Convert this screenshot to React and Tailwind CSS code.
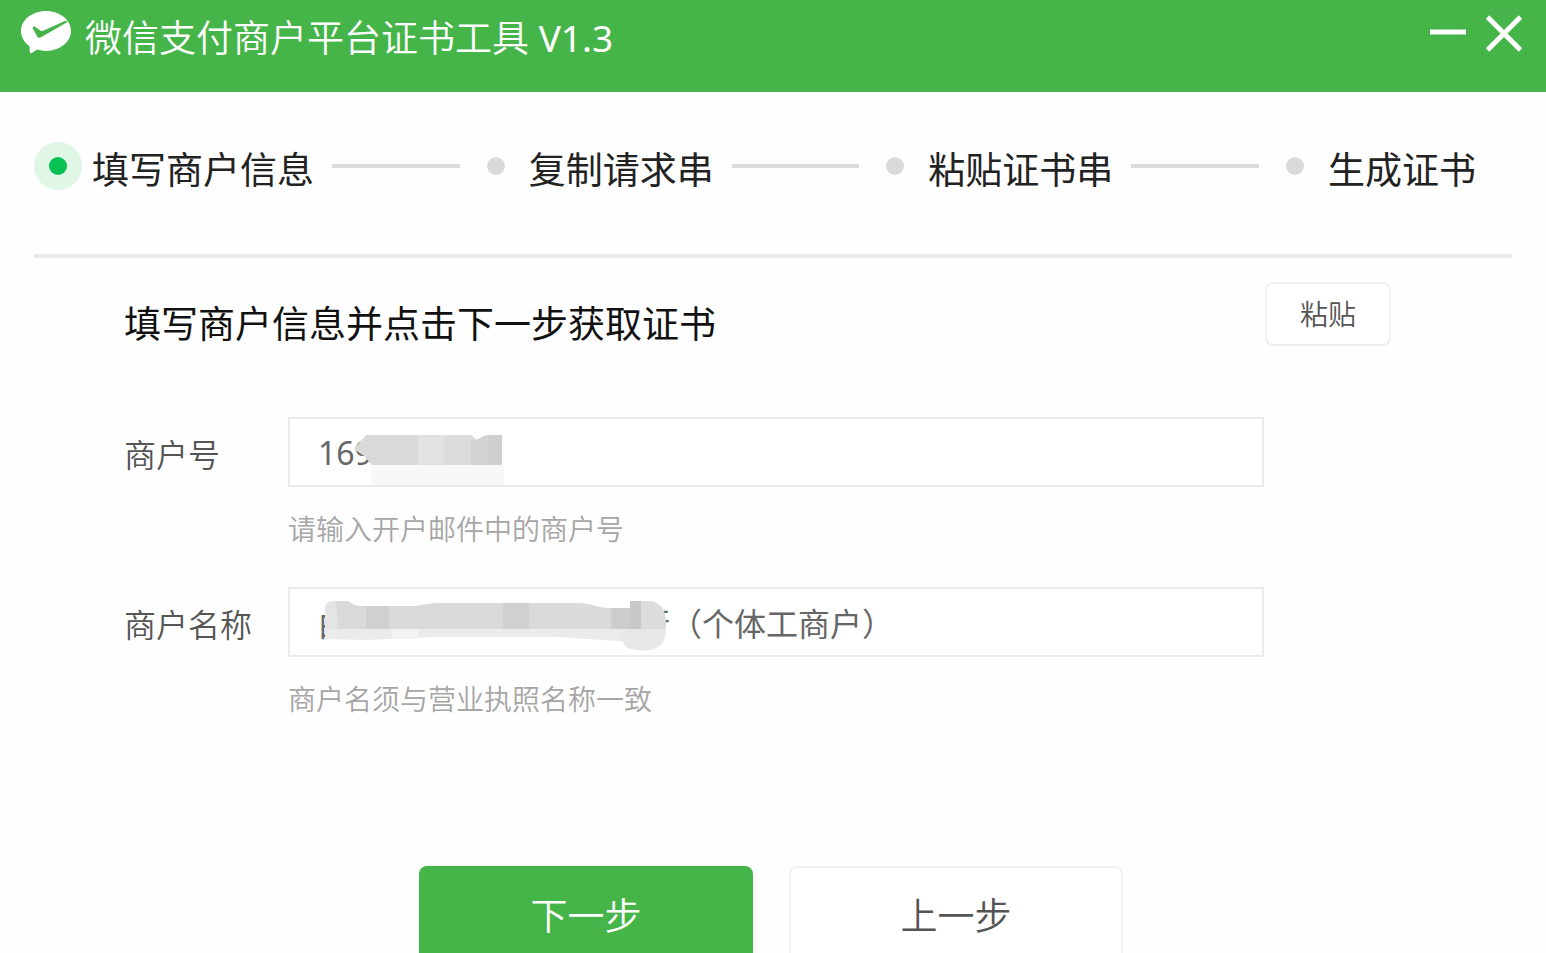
import { Fragment, useState } from 'react';

const steps = ['填写商户信息', '复制请求串', '粘贴证书串', '生成证书'];

function PayLogo() {
  return (
    <svg viewBox="0 0 50 44" className="w-[50px] h-11 shrink-0" aria-hidden="true">
      <path
        d="M25 1C11.200 1 0 9.900 0 21c0 6.200 3.300 11.600 8.600 15.300L8.800 42c0 1.200.9 1.700 1.900 1l5.500-3.400c2.700.8 5.700 1.300 8.800 1.300 13.800 0 25-8.900 25-19.900S38.800 1 25 1z"
        fill="#fff"
      />
      <path
        d="M45 10.500 22 20.800c-1 .5-1.900.4-2.700-.2l-5-3.600c-1.500-1.100-3 .1-2.300 1.700l4 7.600c.8 1.500 2.600 1.900 4 1L46.500 12z"
        fill="#46b549"
      />
    </svg>
  );
}

function TitleBar() {
  return (
    <header className="flex items-start justify-between h-[92px] pl-[21px] pr-6 pt-2.5 bg-[#46b549]">
      <div className="flex items-start gap-[14px]">
        <PayLogo />
        <h1 className="pt-1 text-[37px] leading-[48px] font-[350] text-white whitespace-nowrap">
          微信支付商户平台证书工具 <span className="font-normal">V1.3</span>
        </h1>
      </div>
      <div className="flex gap-5 pt-1">
        <button type="button" aria-label="最小化" className="text-white">
          <svg viewBox="0 0 36 40" className="w-9 h-10">
            <path d="M0 18h36" stroke="currentColor" strokeWidth="5" />
          </svg>
        </button>
        <button type="button" aria-label="关闭" className="text-white">
          <svg viewBox="0 0 36 40" className="w-9 h-10">
            <path d="M1.500 3 34.500 36M34.500 3 1.500 36" stroke="currentColor" strokeWidth="5" />
          </svg>
        </button>
      </div>
    </header>
  );
}

function Stepper({ current }) {
  return (
    <ol className="flex items-center h-[166px] pb-[14px] mx-[34px] pr-9 border-b-4 border-[#e8e8e8]">
      {steps.map((step, i) => (
        <Fragment key={step}>
          {i > 0 && <li aria-hidden="true" className="flex-1 h-1 ml-[18px] mr-[27px] bg-[#dcdcdc]" />}
          <li className={`flex items-center ${i === current ? 'gap-2.5' : 'gap-6'}`}>
            {i === current ? (
              <span className="flex items-center justify-center size-12 rounded-full bg-[#e0f6e6]">
                <span className="size-[18px] rounded-full bg-[#07c153]" />
              </span>
            ) : (
              <span className="size-[18px] rounded-full bg-[#dadada]" />
            )}
            <span className="pt-2 text-[37px] leading-[48px] text-[#222] whitespace-nowrap">{step}</span>
          </li>
        </Fragment>
      ))}
    </ol>
  );
}

function NumberMask() {
  return (
    <svg viewBox="0 0 160 56" className="absolute left-16 top-3 w-40 h-14 pointer-events-none" aria-hidden="true">
      <path d="M19 34h133v22H19z" fill="#f8f8f8" />
      <path d="M14 6h52v30H20l-8-9-10-7z" fill="#d9d9d9" />
      <path d="M66 6h26v30H66z" fill="#e2e2e2" />
      <path d="M92 6h27l6 5v25H92z" fill="#dcdcdc" />
      <path d="M119 12c8 0 10-6 18-6v30h-18z" fill="#d2d2d2" />
      <path d="M137 6h13v30h-13z" fill="#cecece" />
    </svg>
  );
}

function NameMask() {
  return (
    <svg viewBox="0 0 350 60" className="absolute left-9 top-2 w-[350px] h-[60px] pointer-events-none" aria-hidden="true">
      <path d="M1 32h315v18l-22-4-62-4H110l-68 3-41-1z" fill="#ebebeb" />
      <path d="M68 33h26v11H68z" fill="#f3f3f3" />
      <path
        d="M1 14c0-6 4-8 11-8h12c4 3 8 5 14 5h54c10-2 16-3 24-3h136c16 0 20 5 34 5h20V6h20c12 2 15 10 14 28H1z"
        fill="#dadada"
      />
      <path d="M1 14c0-6 4-8 11-8l2 28H1z" fill="#e4e4e4" />
      <path d="M42 11h23v23H42zM179 8h26v26h-26z" fill="#d0d0d0" />
      <path d="M287 13h19v21h-19z" fill="#cdcdcd" />
      <path d="M306 6h11v28h-11z" fill="#c8c8c8" />
      <path d="M317 6h10c10 2 15 9 15 22v6h-25z" fill="#dddddd" />
      <path d="M298 34h44c0 10-4 17-10 19-8 4-24 3-30-1-4-4-4-12-4-18z" fill="#e8e8e8" />
    </svg>
  );
}

function Field({ id, label, hint, value, onChange, children }) {
  return (
    <div className="flex items-start">
      <label htmlFor={id} className="w-[164px] shrink-0 pt-4 text-[32px] leading-[44px] font-[350] text-[#555]">
        {label}
      </label>
      <div className="flex-1 min-w-0">
        <div className="relative">
          <input
            id={id}
            type="text"
            value={value}
            onChange={(e) => onChange(e.target.value)}
            aria-describedby={`${id}-hint`}
            className="block w-full h-[70px] px-7 border-2 border-[#ebebeb] bg-white text-[32px] text-[#666] outline-none"
          />
          {children}
        </div>
        <p id={`${id}-hint`} className="pt-[22px] text-[28px] leading-10 font-[350] text-[#a6a6a6]">
          {hint}
        </p>
      </div>
    </div>
  );
}

export default function App() {
  const [merchantId, setMerchantId] = useState('169');
  const [merchantName, setMerchantName] = useState('由\u3000\u3000\u3000\u3000\u3000\u3000\u3000\u3000\u3000行（个体工商户）');

  return (
    <div className="h-screen overflow-hidden bg-[#fefefe] font-['Noto_Sans','Noto_Sans_CJK_SC',sans-serif]">
      <TitleBar />
      <main>
        <Stepper current={0} />

        <div className="flex items-start justify-between pl-[124px] pr-[155px] pt-6">
          <h2 className="pt-4 text-[37px] leading-[52px] text-[#111]">填写商户信息并点击下一步获取证书</h2>
          <button
            type="button"
            className="w-[126px] h-16 rounded-lg border-2 border-[#f0f0f0] bg-white text-[28px] font-[350] text-[#555]"
          >
            粘贴
          </button>
        </div>

        <form onSubmit={(e) => e.preventDefault()}>
          <div className="flex flex-col gap-[38px] pl-[124px] pr-[282px] pt-[67px]">
            <Field
              id="merchant-id"
              label="商户号"
              hint="请输入开户邮件中的商户号"
              value={merchantId}
              onChange={setMerchantId}
            >
              <NumberMask />
            </Field>
            <Field
              id="merchant-name"
              label="商户名称"
              hint="商户名须与营业执照名称一致"
              value={merchantName}
              onChange={setMerchantName}
            >
              <NameMask />
            </Field>
          </div>

          <div className="flex justify-center gap-9 pt-[147px] pr-1">
            <button
              type="submit"
              className="w-[334px] h-[100px] rounded-lg bg-[#46b549] text-[37px] font-[350] text-white"
            >
              下一步
            </button>
            <button
              type="button"
              className="w-[334px] h-[100px] rounded-lg border-2 border-[#f0f0f0] bg-white text-[37px] font-[350] text-[#555]"
            >
              上一步
            </button>
          </div>
        </form>
      </main>
    </div>
  );
}
